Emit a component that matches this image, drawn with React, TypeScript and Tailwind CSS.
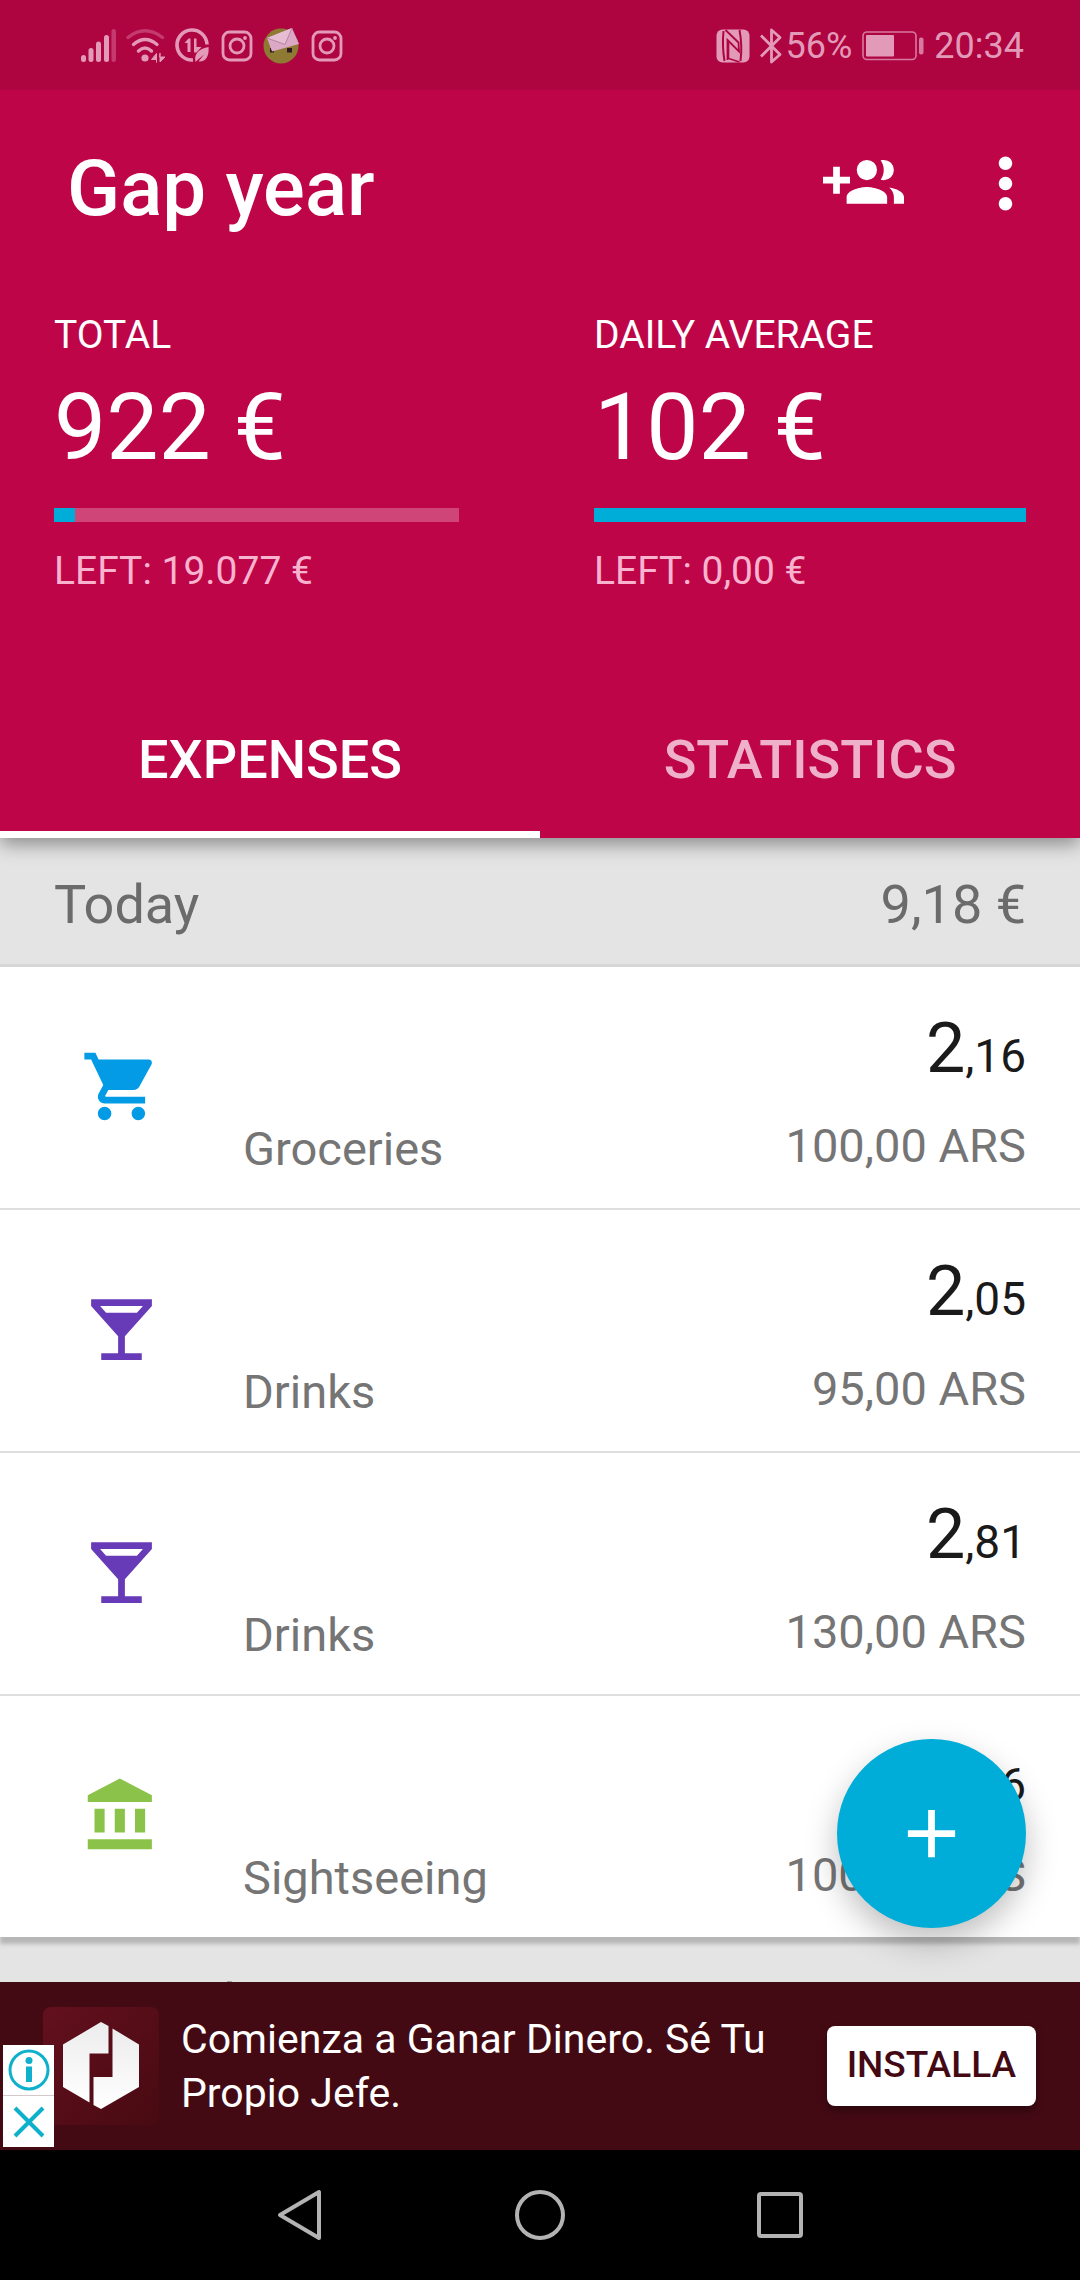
import { useState } from "react";
import type { ReactNode } from "react";

type IconProps = { className?: string };

/* ---------- status bar icons ---------- */

function SignalIcon() {
  return (
    <svg viewBox="0 0 36 34" className="h-[34px] w-9" fill="#e39ab9" aria-hidden="true">
      <rect x="0" y="26" width="5" height="7" rx="2.5" />
      <rect x="7.5" y="19" width="5" height="14" rx="2.5" />
      <rect x="15" y="12.500" width="5" height="20.500" rx="2.500" />
      <rect x="23" y="6" width="5" height="27" rx="2.500" />
      <rect x="30.500" y="0" width="4.500" height="33" rx="2.200" fill="#c53a6e" />
    </svg>
  );
}

function WifiIcon() {
  return (
    <svg viewBox="0 0 42 34" className="h-[34px] w-[42px]" fill="none" strokeWidth="3.4" strokeLinecap="round" aria-hidden="true">
      <path d="M3 8.500Q20 -5 37.500 8.500" stroke="#c53a6e" />
      <path d="M8.500 15.500Q20 5.500 32 15.500" stroke="#e39ab9" />
      <path d="M13.500 22Q20 16 26.500 22" stroke="#e39ab9" />
      <circle cx="20" cy="29" r="3.600" fill="#e39ab9" />
      <path d="M31.500 33V24.500L26.500 30.500H31.500V33zM35 24.500V33L40 28H35z" fill="#e39ab9" stroke="#e39ab9" strokeWidth="1" />
    </svg>
  );
}

function DataSaverIcon() {
  return (
    <svg viewBox="0 0 36 36" className="size-9" aria-hidden="true">
      <path d="M32 16.500A15 15 0 1 0 18 32" fill="none" stroke="#e39ab9" strokeWidth="3.600" />
      <path d="M9.500 15L13.500 10.500H15.500V24H12.500V15zM19 10.500H21.500V19H26.500L21.500 24.500H19z" fill="#e39ab9" />
      <path d="M20.500 34C18.500 25 25 20.500 33.500 19C34.500 28 30.500 34.500 23.500 33.500L29 26.500L22 32.500z" fill="#e39ab9" />
    </svg>
  );
}

function InstagramIcon() {
  return (
    <svg viewBox="0 0 32 32" className="size-8" fill="none" stroke="#e39ab9" strokeWidth="2.800" aria-hidden="true">
      <rect x="2" y="2" width="28" height="28" rx="6.500" />
      <circle cx="16" cy="16" r="7" />
      <circle cx="24" cy="8" r="1.900" fill="#e39ab9" stroke="none" />
    </svg>
  );
}

function MailBadgeIcon() {
  return (
    <svg viewBox="0 0 38 36" className="h-9 w-[38px]" aria-hidden="true">
      <circle cx="18" cy="18" r="17.500" fill="#8e7a33" />
      <path d="M7 20h4v4.500H7zM24 20h5v4.500H24z" fill="#2d1a1e" />
      <path d="M4 10L29 0L36 16L9 23.500z" fill="#dba9c6" />
      <path d="M4 10L22 16.500L29 0" fill="#e6bdd3" stroke="#b27f9b" strokeWidth="0.900" />
    </svg>
  );
}

function NfcIcon() {
  return (
    <svg viewBox="0 0 34 34" className="size-[34px]" aria-hidden="true">
      <rect x="0.500" y="0.500" width="33" height="33" rx="6" fill="#e39ab9" />
      <path d="M7.500 2Q6 17 8.500 32M23.500 1Q26.500 17 24.500 32" fill="none" stroke="#ae0440" strokeWidth="2" />
      <path d="M9.500 1L22.500 13.500L23 22.500L11.500 11V31" fill="none" stroke="#ae0440" strokeWidth="1.800" />
      <path d="M12.500 13.500V29.500L23.500 33" fill="none" stroke="#ae0440" strokeWidth="1.600" />
    </svg>
  );
}

function BluetoothIcon() {
  return (
    <svg viewBox="0 0 22 36" className="h-9 w-[22px]" fill="none" stroke="#e39ab9" strokeWidth="2.800" strokeLinejoin="round" aria-hidden="true">
      <path d="M1 7.500L20 26.500L11.500 34V2L20 9.500L1 28.500" />
    </svg>
  );
}

function BatteryIcon() {
  return (
    <svg viewBox="0 0 62 30" className="h-[30px] w-[62px]" aria-hidden="true">
      <rect x="1" y="1" width="53" height="27.500" rx="4" fill="none" stroke="#d77a9f" strokeWidth="1.600" />
      <rect x="4" y="4" width="28" height="21.500" rx="1" fill="#e39ab9" />
      <rect x="57" y="6.500" width="4.500" height="17" rx="2" fill="#d77a9f" />
    </svg>
  );
}

/* ---------- app icons ---------- */

function Glyph({ d, className }: { d: string; className?: string }) {
  return (
    <svg viewBox="0 0 24 24" className={className} fill="currentColor" aria-hidden="true">
      <path d={d} />
    </svg>
  );
}

const PATHS = {
  addPeople:
    "M13,13C11,13 7,14 7,16V18H19V16C19,14 15,13 13,13M19.62,13.16C20.45,13.88 21,14.82 21,16V18H24V16C24,14.46 21.63,13.47 19.62,13.16M13,11A3,3 0 0,0 16,8A3,3 0 0,0 13,5A3,3 0 0,0 10,8A3,3 0 0,0 13,11M18,11A3,3 0 0,0 21,8A3,3 0 0,0 18,5C17.68,5 17.37,5.05 17.08,5.14C17.65,5.95 18,6.94 18,8C18,9.06 17.65,10.04 17.08,10.86C17.37,10.95 17.68,11 18,11M8,10H5V7H3V10H0V12H3V15H5V12H8V10Z",
  more: "M12 8c1.100 0 2-.9 2-2s-.9-2-2-2-2 .9-2 2 .9 2 2 2zm0 2c-1.100 0-2 .9-2 2s.9 2 2 2 2-.9 2-2-.9-2-2-2zm0 6c-1.100 0-2 .9-2 2s.9 2 2 2 2-.9 2-2-.9-2-2-2z",
  cart: "M17,18A2,2 0 0,1 19,20A2,2 0 0,1 17,22C15.890,22 15,21.100 15,20C15,18.890 15.890,18 17,18M1,2H4.270L5.210,4H20A1,1 0 0,1 21,5C21,5.170 20.950,5.340 20.880,5.500L17.300,11.970C16.960,12.580 16.300,13 15.550,13H8.100L7.200,14.630L7.170,14.750A0.250,0.250 0 0,0 7.420,15H19V17H7C5.890,17 5,16.100 5,15C5,14.650 5.090,14.320 5.240,14.040L6.600,11.590L3,4H1V2M7,18A2,2 0 0,1 9,20A2,2 0 0,1 7,22C5.890,22 5,21.100 5,20C5,18.890 5.890,18 7,18Z",
  cocktail: "M21 5V3H3v2l8 9v5H6v2h12v-2h-5v-5l8-9zM7.430 7L5.660 5h12.690l-1.780 2H7.430z",
  museum: "M4 10v7h3v-7H4zm6 0v7h3v-7h-3zM2 22h19v-3H2v3zm14-12v7h3v-7h-3zm-4.500-9L2 6v2h19V6l-9.500-5z",
  plus: "M19 13h-6v6h-2v-6H5v-2h6V5h2v6h6v2z",
};

function AdLogo({ className }: IconProps) {
  return (
    <svg viewBox="0 0 116 118" className={className} aria-hidden="true">
      <defs>
        <linearGradient id="tile" x1="0" y1="0" x2="1" y2="1">
          <stop offset="0" stopColor="#63101d" />
          <stop offset="1" stopColor="#480a12" />
        </linearGradient>
        <linearGradient id="mark" x1="0" y1="0" x2="0" y2="1">
          <stop offset="0" stopColor="#ececec" />
          <stop offset="1" stopColor="#ffffff" />
        </linearGradient>
      </defs>
      <rect width="116" height="118" rx="8" fill="url(#tile)" />
      <path d="M20 37.500L58 15L65.500 19V46.500H46.500V95.500L20 80z" fill="url(#mark)" />
      <path d="M69.500 21.500L96 37.500V80L58 102L50.500 98V70H69.500z" fill="url(#mark)" />
    </svg>
  );
}

/* ---------- data ---------- */

const budgets = [
  { label: "TOTAL", value: "922 €", left: "LEFT: 19.077 €", used: 5.2, pad: "pr-[81px]" },
  { label: "DAILY AVERAGE", value: "102 €", left: "LEFT: 0,00 €", used: 100, pad: "pr-[54px]" },
];

const expenses = [
  { name: "Groceries", icon: PATHS.cart, color: "text-[#039be5]", whole: "2", cents: ",16", local: "100,00 ARS" },
  { name: "Drinks", icon: PATHS.cocktail, color: "text-[#673ab7]", whole: "2", cents: ",05", local: "95,00 ARS" },
  { name: "Drinks", icon: PATHS.cocktail, color: "text-[#673ab7]", whole: "2", cents: ",81", local: "130,00 ARS" },
  { name: "Sightseeing", icon: PATHS.museum, color: "text-[#8bc34a]", whole: "2", cents: ",16", local: "100,00 ARS" },
];

/* ---------- sections ---------- */

function StatusBar() {
  return (
    <div className="relative z-20 flex h-[90px] shrink-0 items-center justify-between bg-[#ae0440] pt-0.5 pr-14 pl-[81px] text-4xl text-[#e39ab9]">
      <div className="flex items-center gap-2">
        <SignalIcon />
        <WifiIcon />
        <DataSaverIcon />
        <div className="flex items-center gap-2.5 pl-0.5">
          <InstagramIcon />
          <MailBadgeIcon />
          <InstagramIcon />
        </div>
      </div>
      <div className="flex items-center gap-2.5">
        <NfcIcon />
        <div className="flex items-center gap-1">
          <BluetoothIcon />
          <span>56%</span>
        </div>
        <BatteryIcon />
        <span>20:34</span>
      </div>
    </div>
  );
}

function DayHeader({ day, total }: { day: string; total?: string }) {
  return (
    <div className="flex justify-between border-b-[3px] border-[#d6d6d6] px-[54px] pt-[35px] pb-[27px] text-[54px] leading-[64px] text-[#6b6b6b]">
      <h2>{day}</h2>
      {total && <span>{total}</span>}
    </div>
  );
}

function Tab({ active, onClick, children }: { active: boolean; onClick: () => void; children: ReactNode }) {
  return (
    <button
      type="button"
      role="tab"
      aria-selected={active}
      onClick={onClick}
      className={
        "flex-1 border-b-[7px] pt-[47px] pb-[39px] text-[54px] leading-[64px] font-medium " +
        (active ? "border-white text-white" : "border-transparent text-[#efb0ca]")
      }
    >
      {children}
    </button>
  );
}

export default function App() {
  const [tab, setTab] = useState("expenses");

  return (
    <div className="flex h-screen flex-col overflow-hidden bg-[#e4e4e4] font-[Roboto,sans-serif]">
      <StatusBar />

      <header className="relative z-10 shrink-0 bg-[#be0548] text-white shadow-[0_6px_18px_rgba(0,0,0,0.4)]">
        <div className="flex items-start pt-[53px] pr-[34px] pl-[67px]">
          <h1 className="flex-1 text-[78px] leading-[92px] font-medium">Gap year</h1>
          <div className="flex gap-[61px]">
            <button type="button" aria-label="Add people">
              <Glyph d={PATHS.addPeople} className="size-[81px]" />
            </button>
            <button type="button" aria-label="More options">
              <Glyph d={PATHS.more} className="size-[81px]" />
            </button>
          </div>
        </div>

        <div className="mt-[77px] grid grid-cols-2">
          {budgets.map((b) => (
            <section key={b.label} className={"pl-[54px] " + b.pad}>
              <p className="text-[39px] leading-[46px]">{b.label}</p>
              <p className="mt-4 text-[93px] leading-[108px]">{b.value}</p>
              <div
                role="progressbar"
                aria-label={b.label}
                aria-valuenow={b.used}
                className="mt-[26px] h-[14px] bg-[#d04577]"
              >
                <div className="h-full bg-[#00acd8]" style={{ width: `${b.used}%` }} />
              </div>
              <p className="mt-[26px] text-[39px] leading-[46px] text-[#f8b4cf]">{b.left}</p>
            </section>
          ))}
        </div>

        <div role="tablist" className="mt-[87px] flex">
          <Tab active={tab === "expenses"} onClick={() => setTab("expenses")}>
            EXPENSES
          </Tab>
          <Tab active={tab === "statistics"} onClick={() => setTab("statistics")}>
            STATISTICS
          </Tab>
        </div>
      </header>

      <main className="relative min-h-0 flex-1">
        <div className="h-full overflow-hidden">
          <DayHeader day="Today" total="9,18 €" />
          <ul className="divide-y-2 divide-[#dedede] bg-white shadow-[0_7px_4px_rgba(0,0,0,0.2)]">
            {expenses.map((e, i) => (
              <li key={i} className="flex items-end pr-[54px] pl-[81px]">
                <Glyph d={e.icon} className={"mt-[79px] size-[81px] self-start " + e.color} />
                <span className="flex-1 pb-8 pl-[81px] text-[47px] leading-[54px] text-[#757575]">{e.name}</span>
                <div className="pt-10 pb-[35px] text-right">
                  <p className="text-[70px] leading-[82px] text-[#1a1a1a]">
                    {e.whole}
                    <span className="text-[46px] leading-none">{e.cents}</span>
                  </p>
                  <p className="mt-[30px] text-[47px] leading-[54px] text-[#757575]">{e.local}</p>
                </div>
              </li>
            ))}
          </ul>
          <DayHeader day="Yesterday" />
        </div>
        <button
          type="button"
          aria-label="Add expense"
          className="absolute right-[54px] bottom-[54px] flex size-[189px] items-center justify-center rounded-full bg-[#00acd8] text-white shadow-[0_14px_32px_rgba(0,0,0,0.25)]"
        >
          <Glyph d={PATHS.plus} className="size-[81px]" />
        </button>
      </main>

      <aside className="relative flex h-[168px] shrink-0 items-center bg-[#440a14] pr-11 pl-[43px]">
        <AdLogo className="h-[118px] w-[116px] shrink-0" />
        <p className="flex-1 pl-[22px] text-[41px] leading-[54px] text-white">
          Comienza a Ganar Dinero. Sé Tu
          <br />
          Propio Jefe.
        </p>
        <button
          type="button"
          className="h-20 rounded-lg bg-white px-5 pb-0.5 text-[37px] font-medium text-[#440a14] shadow-[0_5px_8px_rgba(0,0,0,0.35)]"
        >
          INSTALLA
        </button>
        <div className="absolute bottom-[3px] left-[3px] flex w-[51px] flex-col divide-y divide-[#d5c8ca] bg-white text-[#0fb0cc]">
          <button type="button" aria-label="Ad information" className="flex h-[51px] items-center justify-center">
            <svg viewBox="0 0 42 42" className="size-[42px]" fill="none" stroke="currentColor" aria-hidden="true">
              <circle cx="21" cy="21" r="19" strokeWidth="3" />
              <circle cx="21" cy="11.500" r="3.500" fill="currentColor" stroke="none" />
              <path d="M21 17.500v15.500" strokeWidth="6" />
            </svg>
          </button>
          <button type="button" aria-label="Close ad" className="flex h-[51px] items-center justify-center">
            <svg viewBox="0 0 32 32" className="size-8" fill="none" stroke="currentColor" strokeWidth="4" aria-hidden="true">
              <path d="M2 2L30 30M30 2L2 30" />
            </svg>
          </button>
        </div>
      </aside>

      <nav className="flex h-[130px] shrink-0 items-center justify-center gap-[188px] bg-black text-[#b3b3b3]">
        <button type="button" aria-label="Back">
          <svg viewBox="0 0 52 52" className="size-[52px]" fill="none" stroke="currentColor" strokeWidth="4" strokeLinejoin="round" aria-hidden="true">
            <path d="M45 3V49L6 26z" />
          </svg>
        </button>
        <button type="button" aria-label="Home">
          <svg viewBox="0 0 52 52" className="size-[52px]" fill="none" stroke="currentColor" strokeWidth="4" aria-hidden="true">
            <circle cx="26" cy="26" r="23" />
          </svg>
        </button>
        <button type="button" aria-label="Recent apps">
          <svg viewBox="0 0 52 52" className="size-[52px]" fill="none" stroke="currentColor" strokeWidth="4" aria-hidden="true">
            <rect x="5" y="5" width="42" height="42" rx="2" />
          </svg>
        </button>
      </nav>
    </div>
  );
}
